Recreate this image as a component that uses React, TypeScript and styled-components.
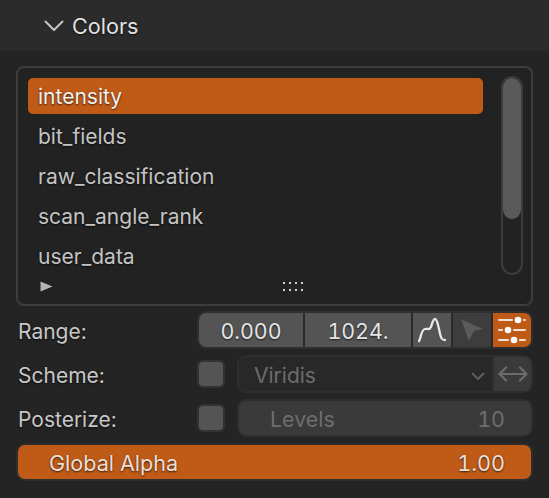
import React from 'react'
import styled, { createGlobalStyle } from 'styled-components'

const Global = createGlobalStyle`
  html, body {
    margin: 0;
    padding: 0;
    background: #242424;
    font-family: Inter, "Noto Sans", sans-serif;
    font-weight: 420;
  }
  * { box-sizing: border-box; }
`

const items = ['intensity', 'bit_fields', 'raw_classification', 'scan_angle_rank', 'user_data']

const App = () => {
  return (
    <Panel>
      <Global />
      <Header>
        <svg width="20" height="12" viewBox="0 0 20 12">
          <path d="M1.5 1.5 L10 10 L18.5 1.5" fill="none" stroke="#c8c8c8" strokeWidth="1.9" strokeLinecap="round" strokeLinejoin="round" />
        </svg>
        <Title>Colors</Title>
      </Header>
      <Body>
        <ListBox>
          <ListTop>
            <Rows>
              {items.map((item, i) => (
                <Row key={item} $active={i === 0}>{item}</Row>
              ))}
            </Rows>
            <Track>
              <Thumb />
            </Track>
          </ListTop>
          <ListBottom>
            <svg width="13" height="11" viewBox="0 0 13 11">
              <path d="M0.5 0.5 L12.5 5.5 L0.5 10.5 Z" fill="#b4b4b4" />
            </svg>
            <Grip>
              {Array.from({ length: 8 }).map((_, i) => <GripDot key={i} />)}
            </Grip>
          </ListBottom>
        </ListBox>

        <PropRow>
          <Label>Range:</Label>
          <Fields>
            <NumField $w={104}>0.000</NumField>
            <NumField $w={106}>1024.</NumField>
            <IconCell>
              <svg width="28" height="26" viewBox="0 0 28 26">
                <path d="M1 24 C3 21 3 13 7 12 C10 11 11 14 13 10 C14 7 15 2 17 2 C20 2 21 15 23 20 C24 23 25 23 27 23" fill="none" stroke="#e8e8e8" strokeWidth="2.3" strokeLinecap="round" />
              </svg>
            </IconCell>
            <IconCell $dim>
              <svg width="24" height="24" viewBox="0 0 24 24">
                <path d="M1 1 L23 11 L14 13 L9 23 Z" fill="#5a5a5a" />
              </svg>
            </IconCell>
            <IconCell $on>
              <svg width="30" height="28" viewBox="0 0 30 28">
                <g stroke="#f0e2d8" strokeWidth="1.8" strokeLinecap="round">
                  <path d="M2 4 H28" />
                  <path d="M2 14 H28" />
                  <path d="M2 24 H28" />
                </g>
                <circle cx="21" cy="4" r="4.3" fill="#fff" stroke="#bf5a17" strokeWidth="2" />
                <circle cx="11" cy="14" r="4.3" fill="#fff" stroke="#bf5a17" strokeWidth="2" />
                <circle cx="17" cy="24" r="4.3" fill="#fff" stroke="#bf5a17" strokeWidth="2" />
              </svg>
            </IconCell>
          </Fields>
        </PropRow>

        <PropRow>
          <Label>Scheme:</Label>
          <Check />
          <Select>
            <FieldText>Viridis</FieldText>
            <Chevron width="14" height="9" viewBox="0 0 14 9">
              <path d="M1.5 1.5 L7 7 L12.5 1.5" fill="none" stroke="#5f5f5f" strokeWidth="1.9" strokeLinecap="round" strokeLinejoin="round" />
            </Chevron>
          </Select>
          <SwapButton>
            <svg width="30" height="16" viewBox="0 0 30 16">
              <path d="M8 1.5 L1.5 8 L8 14.5 M1.5 8 H28.5 M22 1.5 L28.5 8 L22 14.5" fill="none" stroke="#6c6c6c" strokeWidth="2.2" strokeLinecap="round" strokeLinejoin="round" />
            </svg>
          </SwapButton>
        </PropRow>

        <PropRow>
          <Label>Posterize:</Label>
          <Check />
          <LevelsField>
            <FieldText>Levels</FieldText>
            <FieldText>10</FieldText>
          </LevelsField>
        </PropRow>

        <AlphaSlider>
          <span>Global Alpha</span>
          <span>1.00</span>
        </AlphaSlider>
      </Body>
    </Panel>
  )
}

export default App

const Panel = styled.div`
  width: 549px;
  height: 498px;
  overflow: hidden;
  background: #242424;
`
const Header = styled.div`
  height: 51px;
  background: #2b2b2b;
  display: flex;
  align-items: center;
  gap: 8px;
  padding: 1px 0 0 44px;
`
const Title = styled.div`
  color: #e2e2e2;
  font-size: 21.6px;
  text-shadow: 0 1px 2px rgba(0, 0, 0, 0.7);
`
const Body = styled.div`
  padding: 15px 16px 0 16px;
  display: flex;
  flex-direction: column;
`
const ListBox = styled.div`
  width: 517px;
  height: 240px;
  border: 2px solid #3d3d3d;
  border-radius: 8px;
  background: #222222;
  padding: 10px 8px 0 10px;
  margin-bottom: 5px;
`
const ListTop = styled.div`
  display: flex;
  justify-content: space-between;
  align-items: flex-start;
`
const Rows = styled.div`
  width: 455px;
  display: flex;
  flex-direction: column;
  gap: 4px;
`
const Row = styled.div<{ $active?: boolean }>`
  height: 36px;
  line-height: 37px;
  padding-left: 10px;
  border-radius: 5px;
  font-size: 21px;
  color: ${(p) => (p.$active ? '#f2f2f2' : '#c4c4c4')};
  background: ${(p) => (p.$active ? '#bf5a17' : 'transparent')};
  text-shadow: 0 1px 2px rgba(0, 0, 0, 0.7);
`
const Track = styled.div`
  width: 22px;
  height: 199px;
  margin-top: -2px;
  border: 2px solid #3d3d3d;
  border-radius: 11px;
  background: #222222;
  overflow: hidden;
`
const Thumb = styled.div`
  height: 141px;
  background: #5a5a5a;
  border-radius: 9px;
`
const ListBottom = styled.div`
  display: flex;
  align-items: center;
  justify-content: space-between;
  width: 275px;
  margin-top: 6px;
  padding-left: 12px;
`
const Grip = styled.div`
  display: grid;
  grid-template-columns: repeat(4, 2px);
  gap: 5px 4px;
`
const GripDot = styled.div`
  width: 2px;
  height: 2px;
  background: #d0d0d0;
`
const PropRow = styled.div`
  display: flex;
  align-items: center;
  height: 38px;
  margin-bottom: 6px;
`
const Label = styled.div`
  width: 181px;
  padding: 2px 0 0 2px;
  color: #c8c8c8;
  font-size: 21px;
  text-shadow: 0 1px 2px rgba(0, 0, 0, 0.7);
`
const Fields = styled.div`
  flex: 1;
  height: 38px;
  display: flex;
  gap: 2px;
  border-radius: 9px;
  overflow: hidden;
  background: #2a2a2a;
  border: 2px solid #2f2f2f;
`
const NumField = styled.div<{ $w: number }>`
  width: ${(p) => p.$w}px;
  display: flex;
  align-items: center;
  justify-content: center;
  padding-top: 2px;
  background: #545454;
  color: #e4e4e4;
  font-size: 21.4px;
  font-variant-numeric: tabular-nums;
  text-shadow: 0 1px 2px rgba(0, 0, 0, 0.7);
`
const IconCell = styled.div<{ $on?: boolean; $dim?: boolean }>`
  flex: 1;
  display: flex;
  align-items: center;
  justify-content: center;
  background: ${(p) => (p.$on ? '#bf5a17' : p.$dim ? '#3d3d3d' : '#545454')};
`
const Check = styled.div`
  width: 28px;
  height: 28px;
  flex: none;
  background: #545454;
  border: 2px solid #333333;
  border-radius: 6px;
  margin-right: 12px;
`
const FieldText = styled.span`
  padding-top: 2px;
  font-variant-numeric: tabular-nums;
`
const Chevron = styled.svg`
  margin-top: 4px;
`
const Select = styled.div`
  flex: 1;
  height: 38px;
  display: flex;
  align-items: center;
  justify-content: space-between;
  padding: 0 7px 0 15px;
  background: #282828;
  border: 2px solid #2e2e2e;
  border-right: none;
  border-radius: 9px 0 0 9px;
  color: #6c6c6c;
  font-size: 21px;
`
const SwapButton = styled.div`
  width: 41px;
  height: 38px;
  display: flex;
  align-items: center;
  justify-content: center;
  background: #3a3a3a;
  border: 2px solid #2e2e2e;
  border-radius: 0 9px 9px 0;
`
const LevelsField = styled.div`
  flex: 1;
  height: 38px;
  display: flex;
  align-items: center;
  justify-content: space-between;
  padding: 0 26px 0 31px;
  background: #3a3a3a;
  border: 2px solid #2e2e2e;
  border-radius: 9px;
  color: #6e6e6e;
  font-size: 21.4px;
`
const AlphaSlider = styled.div`
  height: 38px;
  display: flex;
  align-items: center;
  justify-content: space-between;
  padding: 2px 26px 0 31px;
  background: #bf5a17;
  border: 2px solid #2e2e2e;
  border-radius: 9px;
  color: #ecdfd6;
  font-size: 21.6px;
  font-variant-numeric: tabular-nums;
  text-shadow: 0 1px 2px rgba(0, 0, 0, 0.7);
`
